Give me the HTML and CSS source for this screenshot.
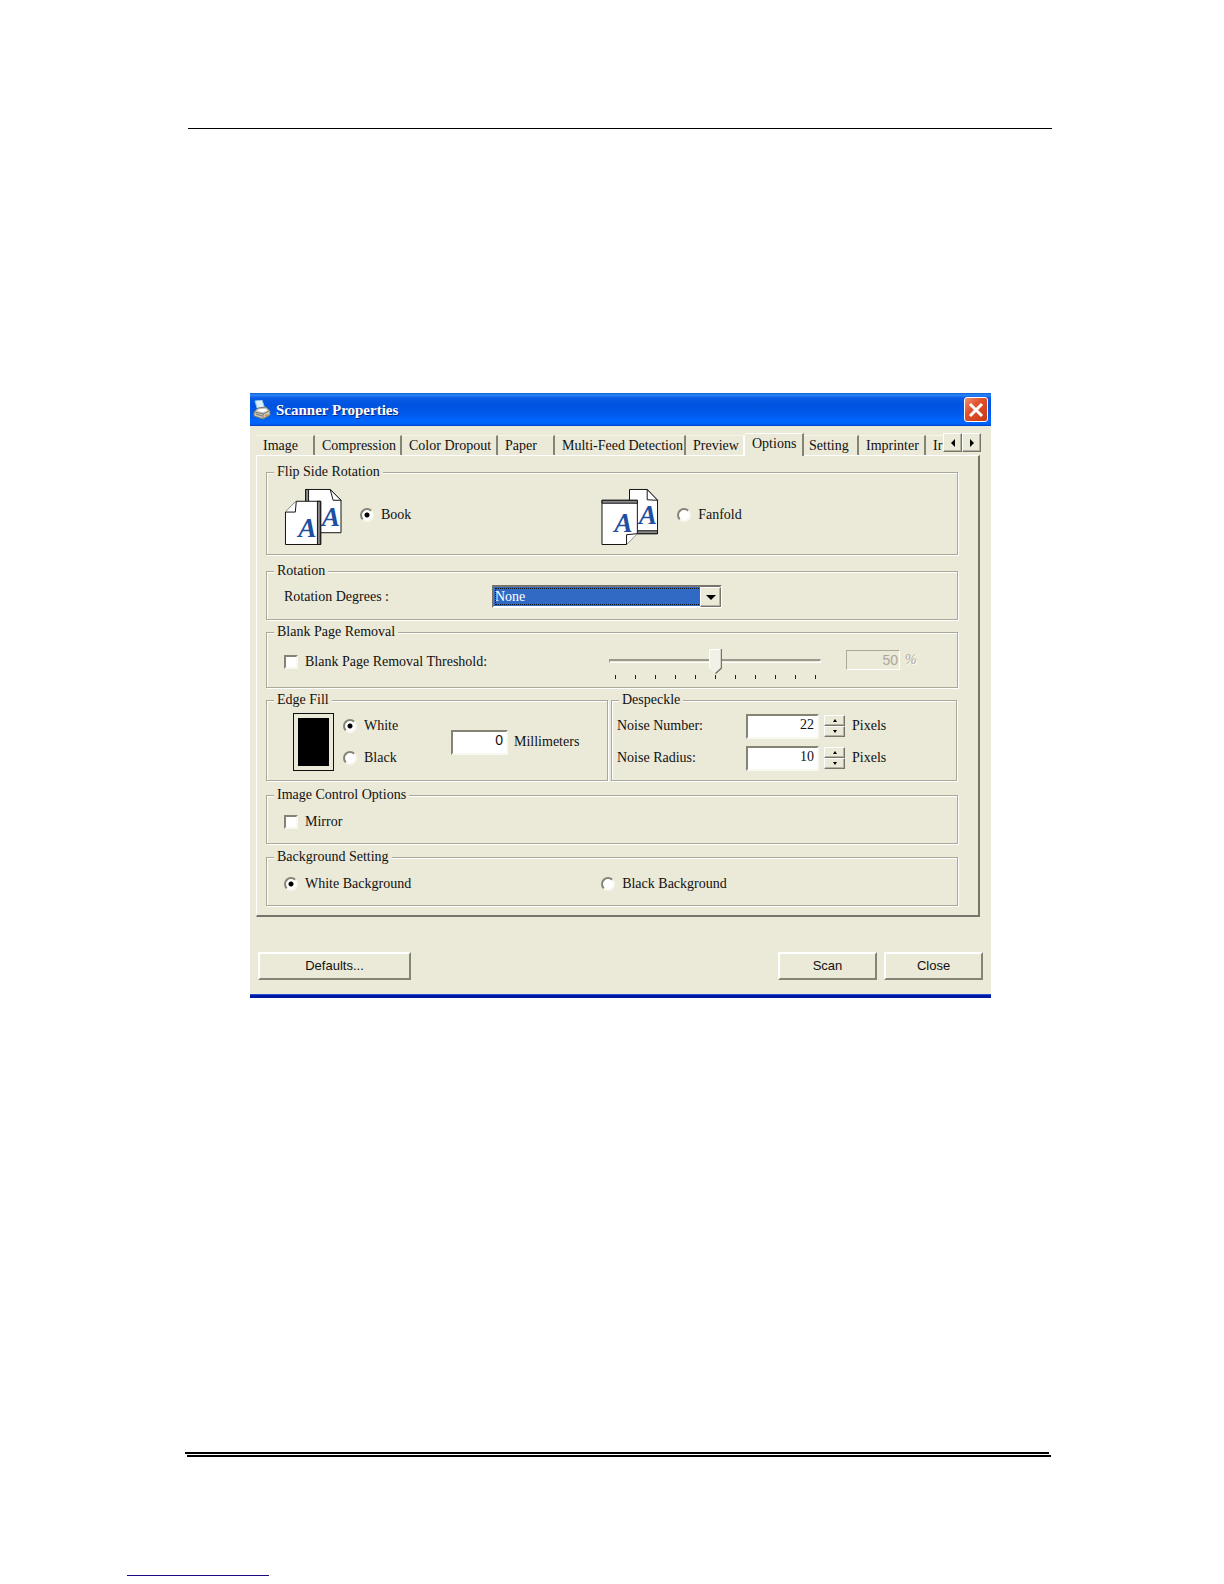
FILE: index.html
```html
<!DOCTYPE html>
<html lang="en">
<head>
<meta charset="utf-8">
<title>Scanner Properties</title>
<link rel="stylesheet" href="styles.css">
</head>
<body>
<div class="sheet">
  <hr class="rule-top">
  <main class="window">
    <header class="titlebar">
      <svg class="app-icon" viewBox="0 0 18 20" aria-hidden="true">
        <path d="M2 1l7-1 3 9-7 2z" fill="#d9efff" stroke="#8fc4f2"/>
        <path d="M1 12l4-4 8-1 4 4v4l-7 4-9-3z" fill="#c9c7bd" stroke="#77756e"/>
        <path d="M2 12l8 2 6-3M10 14v4M3 14l6 2" fill="none" stroke="#7b7970"/>
        <path d="M4 11l3-2 6 0 1 2-4 1z" fill="#fff"/>
        <path d="M12 16l3-1" stroke="#d79a36" stroke-width="2"/>
      </svg>
      <h1 class="title">Scanner Properties</h1>
      <button class="close-x" type="button" aria-label="Close window">
        <svg viewBox="0 0 20 20" aria-hidden="true"><path d="M4 4l12 12M16 4L4 16" stroke="#fff" stroke-width="3"/></svg>
      </button>
    </header>
    <div class="body">
      <div class="strip">
        <div class="tabs" role="tablist">
          <button class="tab" type="button" role="tab">Image</button>
          <button class="tab" type="button" role="tab">Compression</button>
          <button class="tab" type="button" role="tab">Color Dropout</button>
          <button class="tab" type="button" role="tab">Paper</button>
          <button class="tab" type="button" role="tab">Multi-Feed Detection</button>
          <button class="tab tab-before" type="button" role="tab">Preview</button>
          <button class="tab tab-active" type="button" role="tab" aria-selected="true">Options</button>
          <button class="tab tab-after" type="button" role="tab">Setting</button>
          <button class="tab" type="button" role="tab">Imprinter</button>
          <button class="tab tab-last" type="button" role="tab">Ir</button>
        </div>
        <button class="scroller" type="button" aria-label="Scroll tabs left"><svg width="6" height="8" viewBox="0 0 6 8"><path d="M5 0v8L1 4z"/></svg></button>
        <button class="scroller" type="button" aria-label="Scroll tabs right"><svg width="6" height="8" viewBox="0 0 6 8"><path d="M1 0v8l4-4z"/></svg></button>
      </div>

      <section class="panel">
        <fieldset class="group group-flip">
          <legend>Flip Side Rotation</legend>
          <div class="halves">
            <div class="flip">
              <svg class="pages" viewBox="0 0 58 58" aria-hidden="true">
                <path d="M21.5 1.5h25l11 11v33h-36z" fill="#fff" stroke="#111"/>
                <path d="M46.5 1.5l11 11h-8z" fill="#fff" stroke="#111"/>
                <path d="M21.5 1.5h3v20h-3z" fill="#8c8a8c" stroke="#111"/>
                <text class="glyph" x="38" y="39">A</text>
                <path d="M1 24.5l11-11h25v44H1z" fill="#fff" stroke="#111"/>
                <path d="M1 24.5h10l1-11" fill="#fff" stroke="#111"/>
                <text class="glyph" x="14" y="50">A</text>
                <path d="M33.5 13.5h3v44h-3z" fill="#8c8a8c" stroke="#111"/>
              </svg>
              <label class="choice"><input type="radio" name="flip" checked>Book</label>
            </div>
            <div class="flip">
              <svg class="pages" viewBox="0 0 58 58" aria-hidden="true">
                <path d="M28.5 1.5h18l10.500 11v34H28.5z" fill="#fff" stroke="#111"/>
                <path d="M46.5 1.5V12l10.500 .5z" fill="#fff" stroke="#111"/>
                <path d="M28.5 43.500H57v3H28.500z" fill="#8c8a8c" stroke="#111"/>
                <text class="glyph" x="38" y="37">A</text>
                <path d="M.5 12.5h36v34l-11 11H.5z" fill="#fff" stroke="#111"/>
                <path d="M25.5 57.5v-10l11-1" fill="#fff" stroke="#111"/>
                <path d="M.5 12.5h36v3H.5z" fill="#8c8a8c" stroke="#111"/>
                <text class="glyph" x="13" y="45">A</text>
              </svg>
              <label class="choice"><input type="radio" name="flip">Fanfold</label>
            </div>
          </div>
        </fieldset>

        <fieldset class="group group-rotation">
          <legend>Rotation</legend>
          <div class="line">
            <label class="rotation-label" for="degrees">Rotation Degrees :</label>
            <div class="combo">
              <select id="degrees"><option>None</option></select>
              <span class="combo-arrow"><svg width="10" height="5" viewBox="0 0 10 5"><path d="M0 0h10L5 5z"/></svg></span>
            </div>
          </div>
        </fieldset>

        <fieldset class="group group-blank">
          <legend>Blank Page Removal</legend>
          <div class="line">
            <label class="choice blank-label"><input type="checkbox">Blank Page Removal Threshold:</label>
            <div class="slider">
              <input type="range" min="0" max="100" value="50" disabled aria-label="Threshold">
              <div class="ticks"><i></i><i></i><i></i><i></i><i></i><i></i><i></i><i></i><i></i><i></i><i></i></div>
            </div>
            <label class="percent"><input type="text" value="50" disabled>%</label>
          </div>
        </fieldset>

        <div class="pair">
          <fieldset class="group group-short">
            <legend>Edge Fill</legend>
            <div class="line edge">
              <div class="swatch"></div>
              <div class="stack">
                <label class="choice"><input type="radio" name="edge" checked>White</label>
                <label class="choice"><input type="radio" name="edge">Black</label>
              </div>
              <label class="mm"><input class="field field-sans" type="text" value="0">Millimeters</label>
            </div>
          </fieldset>
          <fieldset class="group group-short">
            <legend>Despeckle</legend>
            <div class="noise">
              <label class="noise-label" for="number">Noise Number:</label>
              <input class="field" id="number" type="text" value="22">
              <span class="spin">
                <button type="button" aria-label="Increase number"><svg width="4" height="3" viewBox="0 0 4 3"><path d="M0 3h4L2 0z"/></svg></button>
                <button type="button" aria-label="Decrease number"><svg width="4" height="3" viewBox="0 0 4 3"><path d="M0 0h4L2 3z"/></svg></button>
              </span>
              <span>Pixels</span>
            </div>
            <div class="noise">
              <label class="noise-label" for="radius">Noise Radius:</label>
              <input class="field" id="radius" type="text" value="10">
              <span class="spin">
                <button type="button" aria-label="Increase radius"><svg width="4" height="3" viewBox="0 0 4 3"><path d="M0 3h4L2 0z"/></svg></button>
                <button type="button" aria-label="Decrease radius"><svg width="4" height="3" viewBox="0 0 4 3"><path d="M0 0h4L2 3z"/></svg></button>
              </span>
              <span>Pixels</span>
            </div>
          </fieldset>
        </div>

        <fieldset class="group group-simple">
          <legend>Image Control Options</legend>
          <div class="line"><label class="choice"><input type="checkbox">Mirror</label></div>
        </fieldset>

        <fieldset class="group group-simple">
          <legend>Background Setting</legend>
          <div class="halves">
            <label class="choice"><input type="radio" name="bg" checked>White Background</label>
            <label class="choice"><input type="radio" name="bg">Black Background</label>
          </div>
        </fieldset>
      </section>

      <footer class="actions">
        <button class="btn btn-wide" type="button">Defaults...</button>
        <button class="btn" type="button">Scan</button>
        <button class="btn" type="button">Close</button>
      </footer>
    </div>
  </main>
  <div class="rules-bottom"><hr><hr></div>
  <hr class="rule-link">
</div>
</body>
</html>
```

FILE: styles.css
```css
* { box-sizing: border-box; }

body {
  margin: 0;
  background: #fff;
  color: #111;
  font: 14px/16px "Liberation Serif", "Times New Roman", serif;
}

button, input, select { font: inherit; color: inherit; margin: 0; }
hr { border: 0; margin: 0; }

.sheet {
  min-height: 100vh;
  display: flex;
  flex-direction: column;
  padding: 128px 172px 8px 188px;
}

.rule-top { height: 1px; background: #000; }

.rules-bottom { margin: auto 3px 118px -3px; }
.rules-bottom hr { height: 2px; background: #000; }
.rules-bottom hr + hr { margin: 1px -2px 0 2px; }

.rule-link { width: 142px; height: 1px; margin-left: -61px; background: #1a0a80; }

/* Window frame */
.window {
  margin: 264px 61px 0 62px;
  background: #ebe9d8;
  border-bottom: 3px solid #0018a0;
}

.titlebar {
  display: flex;
  align-items: center;
  height: 33px;
  padding: 0 3px 0 3px;
  background: linear-gradient(#0b5fd0 0, #2b86f8 2px, #0a5ce6 5px, #0053e0 12px, #0058ea 20px, #0066ff 28px, #0062f6 31px, #003fc4 33px);
}

.app-icon { width: 18px; height: 20px; }

.title {
  flex: 1;
  margin: 0 0 0 5px;
  color: #fff;
  font-size: 15px;
  line-height: 20px;
  text-shadow: 1px 1px #0a2a80;
}

.close-x {
  width: 24px;
  height: 25px;
  padding: 1px;
  border: 1px solid #fff;
  border-radius: 3px;
  background: linear-gradient(135deg, #f0906e, #e0512c 40%, #c83a14);
}
.close-x svg { display: block; width: 20px; height: 20px; }

.body {
  padding: 7px 8px 14px 6px;
  border-bottom: 1px solid #2450d8;
}

/* Tabs */
.strip { display: flex; align-items: flex-start; height: 22px; padding-right: 2px; }

.tabs {
  flex: 1;
  display: grid;
  grid-template-columns: 59fr 87fr 96fr 57fr 131fr 59fr 59fr 55fr 67fr 17fr;
  align-items: end;
  height: 22px;
  min-width: 0;
}

.tab {
  min-width: 0;
  height: 20px;
  padding: 1px 0 0 7px;
  border: 0;
  border-top: 1px solid #f6f5ec;
  border-right: 2px solid #858374;
  background: #ebe9d8;
  text-align: left;
  white-space: nowrap;
}
.tab-before { border-right-color: #fff; }
.tab-active {
  position: relative;
  height: 23px;
  margin-bottom: -1px;
  padding-bottom: 4px;
  border-color: #fff #858374 #fff #fff;
}
.tab-after { padding-left: 5px; }
.tab-last { border-right: 0; }

.scroller {
  display: grid;
  place-items: center;
  width: 19px;
  height: 19px;
  padding: 0;
  border: 1px solid;
  border-color: #fff #77756a #77756a #fff;
  box-shadow: inset -1px -1px #b5b2a0;
  background: #ebe9d8;
}

.panel {
  display: flex;
  flex-direction: column;
  gap: 4px;
  margin-right: 3px;
  padding: 8px 20px 9px 9px;
  border: solid;
  border-width: 1px 2px 2px 1px;
  border-color: #fff #77756a #77756a #fff;
}

/* Groups */
.group {
  min-width: 0;
  margin: 0;
  padding: 0 7px;
  border: 1px solid #aca899;
  box-shadow: 1px 1px #fff, inset 1px 1px #fff;
}
.group legend { padding: 0 3px; background: #ebe9d8; }

.group-flip { padding-top: 8px; padding-bottom: 9px; margin-bottom: 4px; }
.group-rotation { padding-top: 6px; padding-bottom: 11px; }
.group-blank { padding-top: 8px; padding-bottom: 7px; }
.group-short { padding-top: 2px; padding-bottom: 6px; }
.group-simple { padding-top: 11px; padding-bottom: 13px; }
.group-simple + .group-simple { margin-top: 1px; }

.line, .halves { padding-left: 10px; }
.line { display: flex; align-items: center; }
.halves { display: grid; grid-template-columns: 10fr 11fr; }

.choice { display: flex; align-items: center; gap: 7px; }

.choice input {
  appearance: none;
  flex: none;
  width: 14px;
  height: 14px;
  border: 2px solid;
  border-color: #858374 #f8f7f0 #f8f7f0 #858374;
  background: #fff;
}
.choice input[type="radio"] { border-radius: 50%; }
.choice input[type="radio"]:checked {
  background: radial-gradient(circle, #000 2px, #fff 3px);
}

.flip { display: flex; align-items: center; gap: 18px; }
.flip .choice { padding-bottom: 4px; }
.pages { display: block; width: 58px; height: 57px; }
.glyph { fill: #1f4fa0; font: italic bold 28px "Liberation Serif", serif; }

.rotation-label { flex: 0 0 208px; }
.combo { position: relative; display: flex; width: 230px; }
.combo select {
  appearance: none;
  width: 100%;
  height: 23px;
  padding: 0 0 0 1px;
  border: 2px solid;
  border-color: #77756a #fff #fff #77756a;
  border-radius: 0;
  outline: 1px dotted #111;
  outline-offset: -4px;
  background: #316ac5;
  color: #fff;
}
.combo-arrow {
  position: absolute;
  top: 2px;
  right: 1px;
  display: grid;
  place-items: center;
  width: 21px;
  height: 20px;
  border: 1px solid;
  border-color: #fff #77756a #77756a #fff;
  box-shadow: inset -1px -1px #b5b2a0;
  background: #ebe9d8;
  pointer-events: none;
}

.group-blank .line { align-items: flex-start; }
.blank-label { height: 28px; flex: 0 0 325px; }
.slider { width: 212px; }
.slider input {
  appearance: none;
  display: block;
  width: 100%;
  height: 25px;
  background: none;
}
.slider input::-webkit-slider-runnable-track {
  height: 4px;
  border: solid;
  border-width: 2px 1px 1px;
  border-color: #9b998b #fff #fff #9b998b;
}
.slider input::-webkit-slider-thumb {
  appearance: none;
  width: 13px;
  height: 25px;
  margin-top: -12px;
  border: 0;
  background: url("data:image/svg+xml,%3Csvg xmlns='http://www.w3.org/2000/svg' viewBox='0 0 13 25'%3E%3Cpath d='M0 0h13v19l-6.500 6L0 19z' fill='%23f2f1e8'/%3E%3Cpath d='M.5 19V.5H12' fill='none' stroke='%23fff'/%3E%3Cpath d='M12.500 0v19l-6 5.500' fill='none' stroke='%2377756a' stroke-width='1.500'/%3E%3C/svg%3E");
}
.ticks { display: flex; justify-content: space-between; padding: 2px 5px 0 6px; }
.ticks i { width: 1px; height: 4px; margin-bottom: 1px; background: #222; }

.percent {
  display: flex;
  align-items: center;
  gap: 5px;
  height: 24px;
  margin-left: 25px;
  color: #aca899;
  font-style: italic;
  text-shadow: 1px 1px #fff;
}
.percent input {
  width: 54px;
  height: 20px;
  padding: 0 1px;
  border: 1px solid;
  border-color: #aca899 #fff #fff #aca899;
  background: none;
  font: 14px/16px "Liberation Sans", Arial, sans-serif;
  text-align: right;
}

.pair { display: grid; grid-template-columns: 342fr 346fr; gap: 3px; margin: 0 1px 2px 0; }

.edge { height: 64px; padding-left: 19px; }
.swatch {
  flex: none;
  width: 41px;
  height: 58px;
  border: 1px solid #111;
  background: #000;
  box-shadow: inset 0 0 0 4px #ebe9d8;
}
.stack { width: 108px; margin-left: 9px; }
.stack .choice { height: 32px; }
.mm { display: flex; align-items: center; gap: 6px; }
.mm .field { width: 57px; }

.field {
  width: 73px;
  height: 25px;
  padding: 0 3px 2px;
  border: 2px solid;
  border-color: #858374 #f8f7f0 #f8f7f0 #858374;
  background: #fff;
  text-align: right;
}
.field-sans { padding-bottom: 4px; font-family: "Liberation Sans", Arial, sans-serif; }

.noise { display: flex; align-items: center; height: 32px; margin-left: -2px; }
.noise-label { width: 129px; }
.spin { display: grid; width: 21px; margin: 0 7px 0 5px; }
.spin button {
  display: grid;
  place-items: center;
  height: 11px;
  padding: 0;
  border: 1px solid;
  border-color: #fff #77756a #77756a #fff;
  box-shadow: inset -1px -1px #b5b2a0;
  background: #ebe9d8;
}

/* Bottom buttons */
.actions { display: flex; gap: 7px; margin-top: 35px; padding-left: 2px; }
.btn {
  width: 99px;
  height: 28px;
  padding: 0;
  border: 2px solid;
  border-color: #fff #858374 #858374 #fff;
  background: #ebe9d8;
  font: 13px/16px "Liberation Sans", Arial, sans-serif;
}
.btn-wide { width: 153px; margin-right: auto; }
```
